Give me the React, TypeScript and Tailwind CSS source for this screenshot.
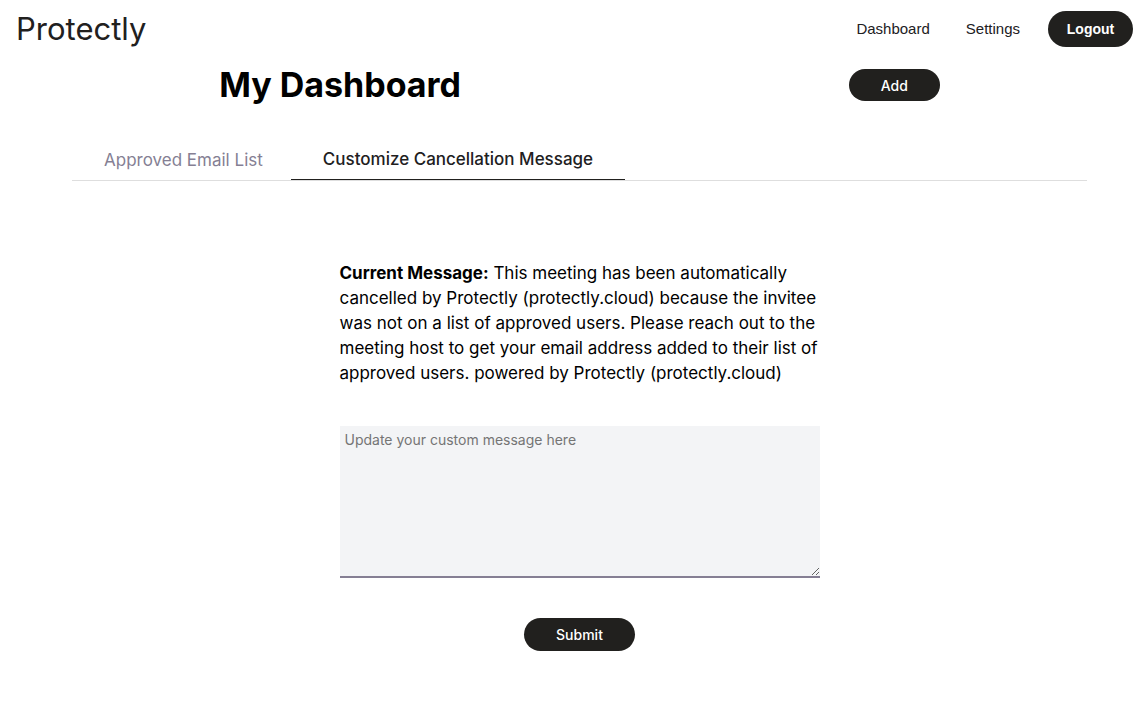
import { useState } from "react";

const tabs = ["Approved Email List", "Customize Cancellation Message"];

function Header() {
  return (
    <header className="flex h-[58px] items-center justify-between pr-[15px] pl-4">
      <a href="#home" className="text-[31px] leading-[56px] text-[#21201e]">
        Protectly
      </a>
      <nav className="flex items-center gap-9 font-['Liberation_Sans',Arial,sans-serif] text-[15px] text-[#21201e]">
        <a href="#dashboard">Dashboard</a>
        <a href="#settings">Settings</a>
        <button
          type="button"
          className="-ml-2 h-9 w-[85px] rounded-full bg-[#21201e] text-[14px] font-bold text-white"
        >
          Logout
        </button>
      </nav>
    </header>
  );
}

export default function App() {
  const [active, setActive] = useState(1);
  return (
    <div className="min-h-screen bg-white font-['Inter',sans-serif] text-black">
      <Header />
      <main className="pr-[61px] pl-[72px]">
        <div className="mx-auto flex w-[71%] items-center justify-between pt-[2px]">
          <h1 className="text-[34px] leading-[50px] font-bold">My Dashboard</h1>
          <button
            type="button"
            className="h-8 w-[91px] rounded-full bg-[#21201e] text-[14px] font-medium text-white"
          >
            Add
          </button>
        </div>
        <div role="tablist" className="mt-[29px] flex h-[42px] border-b border-[#dedede]">
          {tabs.map((label, i) => (
            <button
              key={label}
              type="button"
              role="tab"
              aria-selected={i === active}
              onClick={() => setActive(i)}
              className={
                i === active
                  ? "border-b border-[#21201e] px-8 pt-[2px] text-[17px] font-medium text-[#21201e]"
                  : "pt-[2px] pr-7 pl-8 text-[17px] text-[#857f94]"
              }
            >
              {label}
            </button>
          ))}
        </div>
        <form
          className="mx-auto flex max-w-[480px] flex-col items-center pt-20"
          onSubmit={(e) => e.preventDefault()}
        >
          <p className="w-full text-[17px] leading-[25px]">
            <strong className="font-bold">Current Message:</strong> This meeting has been automatically
            cancelled by Protectly (protectly.cloud) because the invitee was not on a list of approved
            users. Please reach out to the meeting host to get your email address added to their list of
            approved users. powered by Protectly (protectly.cloud)
          </p>
          <textarea
            aria-label="Custom message"
            placeholder="Update your custom message here"
            className="mt-10 h-[152px] w-full border-b-2 border-[#857f94] bg-[#f3f4f6] px-[5px] py-1 text-[14px] leading-5 outline-none placeholder:text-[#757575]"
          />
          <button
            type="submit"
            className="mt-10 h-[33px] w-[111px] rounded-full bg-[#21201e] text-[14px] font-medium text-white"
          >
            Submit
          </button>
        </form>
      </main>
    </div>
  );
}
